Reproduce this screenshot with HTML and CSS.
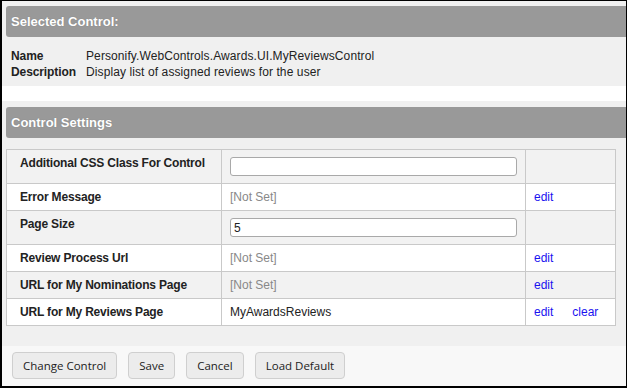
FILE: index.html
```html
<!DOCTYPE html>
<html lang="en">
<head>
    <meta charset="UTF-8">
    <title>Control Settings</title>
    <link rel="stylesheet" href="styles.css">
</head>
<body>
    <div class="frame">
        <div class="panel panel-selected">
            <div class="panel-header">Selected Control:</div>
            <table class="info">
                <tr><th>Name</th><td>Personify.WebControls.Awards.UI.MyReviewsControl</td></tr>
                <tr><th>Description</th><td>Display list of assigned reviews for the user</td></tr>
            </table>
        </div>

        <div class="panel panel-settings">
            <div class="panel-header">Control Settings</div>
            <table class="settings">
                <colgroup>
                    <col class="col-label">
                    <col class="col-value">
                    <col class="col-action">
                </colgroup>
                <tr>
                    <th>Additional CSS Class For Control</th>
                    <td><input type="text" class="field"></td>
                    <td></td>
                </tr>
                <tr>
                    <th>Error Message</th>
                    <td class="not-set">[Not Set]</td>
                    <td><a>edit</a></td>
                </tr>
                <tr>
                    <th>Page Size</th>
                    <td><input type="text" class="field" value="5"></td>
                    <td></td>
                </tr>
                <tr>
                    <th>Review Process Url</th>
                    <td class="not-set">[Not Set]</td>
                    <td><a>edit</a></td>
                </tr>
                <tr>
                    <th>URL for My Nominations Page</th>
                    <td class="not-set">[Not Set]</td>
                    <td><a>edit</a></td>
                </tr>
                <tr>
                    <th>URL for My Reviews Page</th>
                    <td>MyAwardsReviews</td>
                    <td><a>edit</a><a class="clear">clear</a></td>
                </tr>
            </table>
        </div>

        <div class="buttons">
            <button>Change Control</button>
            <button>Save</button>
            <button>Cancel</button>
            <button>Load Default</button>
        </div>
    </div>
</body>
</html>
```

FILE: styles.css
```css
body { margin: 0; font-family: "Liberation Sans", Arial, sans-serif; font-size: 12px; color: #222; background: #fff; }
.frame { box-sizing: border-box; width: 627px; height: 388px; border-style: solid; border-color: #000; border-width: 1px 1px 2px 2px; display: flex; flex-direction: column; }

.panel { background: #f0f0f0; padding-left: 4px; }
.panel-selected { padding-top: 5px; padding-bottom: 6px; }
.panel-settings { margin-top: 15px; padding-top: 6px; flex: 1; }
.panel-header { height: 31px; line-height: 31px; background: #999; color: #fff; font-weight: bold; font-size: 13px; padding-left: 5px; border-radius: 3px 0 0 3px; text-shadow: 0 0 1px #777; }

.info { border-collapse: collapse; margin: 11px 0 0 5px; }
.info th, .info td { padding: 0; height: 16px; line-height: 16px; text-align: left; vertical-align: middle; }
.info th { width: 75px; font-weight: bold; letter-spacing: -0.1px; }
.info td { letter-spacing: 0.1px; }

.settings { border-collapse: collapse; table-layout: fixed; width: 610px; margin-top: 11px; }
.settings .col-label { width: 215px; }
.settings .col-value { width: 304px; }
.settings th, .settings td { border: 1px solid #c9c9c9; padding: 6px 7px 6px 8px; line-height: 14px; text-align: left; vertical-align: top; }
.settings th { padding-left: 13px; font-weight: bold; letter-spacing: -0.18px; }
.settings tr:nth-child(odd) { background: #f2f2f2; }
.settings tr:nth-child(even) { background: #fff; }
.settings td { vertical-align: middle; }
.settings .not-set { color: #888; }
.settings a { color: #1a12f0; cursor: pointer; }
.settings a.clear { margin-left: 19px; }

.field { display: block; box-sizing: border-box; width: 287px; height: 19px; margin: 1px 0; padding: 0 3px; border: 1px solid #a9a9a9; border-radius: 3px; background: #fff; font-family: "Liberation Sans", Arial, sans-serif; font-size: 12px; color: #222; }

.buttons { height: 40px; box-sizing: border-box; background: #f8f8f8; padding: 6px 0 0 10px; display: flex; gap: 11px; align-items: flex-start; }
.buttons button { height: 27px; padding: 0 10px; background: #ececec; border: 1px solid #cfcfcf; border-radius: 4px; font-family: "Open Sans", sans-serif; font-size: 11.5px; color: #222; cursor: pointer; }
```
